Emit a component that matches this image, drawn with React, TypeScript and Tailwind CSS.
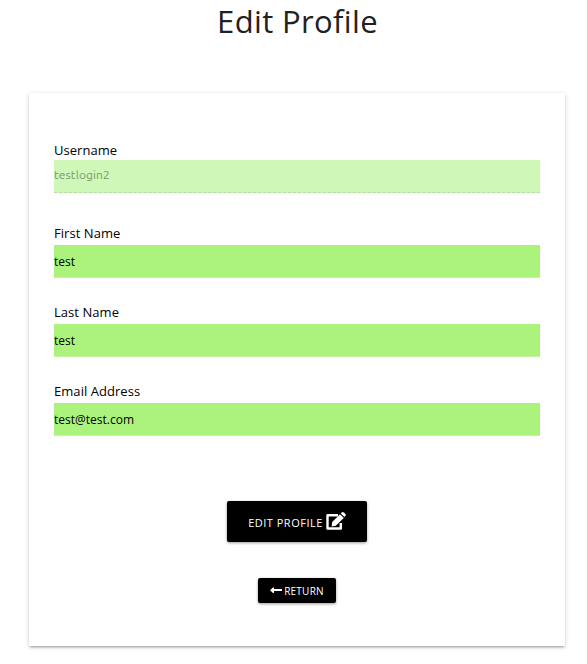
const fields = [
  { label: "First Name", value: "test" },
  { label: "Last Name", value: "test" },
  { label: "Email Address", value: "test@test.com" },
];

function EditIcon() {
  return (
    <svg viewBox="0 0 20 18" className="mb-[2px] ml-[3px] h-[18px] w-5 shrink-0" fill="none">
      <path d="M12 3.2H1.5V16.5H14.8V11" stroke="white" strokeWidth="2.4" strokeLinejoin="round" />
      <path d="M14 2.2 17.8 6 9.8 13.8 5.6 14.4 6.2 10Z" fill="white" />
      <path d="M14.8 1.5 15.8.5Q16.8 -.3 17.8.5L19.4 2.1Q20.2 3 19.4 4L18.5 5Z" fill="white" />
    </svg>
  );
}

function ArrowIcon() {
  return (
    <svg viewBox="0 0 12 7" className="mr-[2px] mb-[1px] h-[7px] w-3 shrink-0" fill="white">
      <path d="M0 3.2 3 .4Q4 0 4 1V2H11.5Q12 2 12 2.5V3.5Q12 4 11.5 4H4V5.4Q4 6.4 3 6Z" />
    </svg>
  );
}

export default function App() {
  return (
    <main className="h-[664px] overflow-hidden bg-white pr-[22px] pl-[29px] font-['Open_Sans',sans-serif] text-black">
      <h1 className="h-[93px] pl-px text-center text-[31px] leading-[43px] tracking-[0.35px] text-[#212121]">Edit Profile</h1>
      <form className="flex h-[553px] w-full flex-col rounded-[1px] bg-white px-[25px] pt-[47px] shadow-[0_2px_2px_0_rgba(0,0,0,0.12),0_3px_1px_-2px_rgba(0,0,0,0.1),0_1px_5px_0_rgba(0,0,0,0.16)]">
        <label className="block h-[83px] text-[13px] leading-5 tracking-[0.05px]">
          Username
          <input disabled value="testlogin2" className="block h-[33px] w-full border-b border-dashed border-[#b4dba0] bg-[#cff7b8] pb-[3px] font-['Ubuntu','Open_Sans',sans-serif] text-xs tracking-[0.1px] text-[#7b966d]" />
        </label>
        {fields.map((f) => (
          <label key={f.label} className="block h-[79px] text-[13px] leading-5 tracking-[0.05px]">
            {f.label}
            <input readOnly value={f.value} className="mt-[2px] block h-[33px] w-full border-b border-[#bff69d] bg-[#abf37d] text-xs tracking-normal" />
          </label>
        ))}
        <button type="button" className="mt-[41px] flex h-[41px] w-[140px] shrink-0 items-center justify-center self-center rounded-xs bg-black text-[11px] text-white shadow-[0_1px_3px_rgba(0,0,0,0.4)]">
          <span className="pt-[3px] tracking-[0.5px]">EDIT PROFILE</span>
          <EditIcon />
        </button>
        <button type="button" className="mt-9 flex h-[25px] w-[78px] shrink-0 items-center justify-center self-center rounded-xs bg-black text-[10px] text-white shadow-[0_1px_3px_rgba(0,0,0,0.4)]">
          <ArrowIcon />
          <span className="pt-[2px] font-medium tracking-[0.25px]">RETURN</span>
        </button>
      </form>
    </main>
  );
}
